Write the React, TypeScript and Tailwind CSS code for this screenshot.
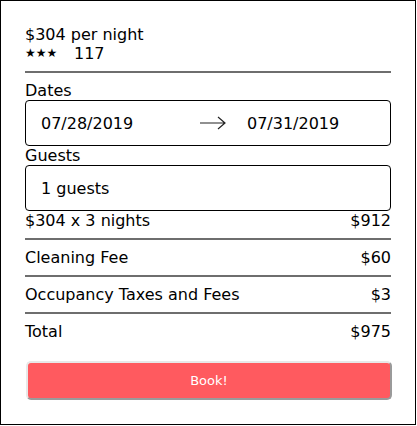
import React from 'react';

const rows = [
  { label: '$304 x 3 nights', value: '$912' },
  { label: 'Cleaning Fee', value: '$60' },
  { label: 'Occupancy Taxes and Fees', value: '$3' },
  { label: 'Total', value: '$975' },
];

export default function App() {
  return (
    <div
      className="w-[416px] h-[425px] border border-black bg-white text-black text-[16px] leading-[19px] px-6 pt-[24px]"
      style={{ fontFamily: '"DejaVu Sans", sans-serif' }}
    >
      {/* price header */}
      <div>$304 per night</div>
      <div className="flex items-center">
        <span className="text-[12px] leading-[19px] w-[49px]">★★★</span>
        <span>117</span>
      </div>
      <div className="h-[2px] bg-[#6e6e6e] mt-[8px]" />

      {/* dates */}
      <div className="mt-[8px]">Dates</div>
      <div className="h-[46px] border border-black rounded-[4px] flex items-center pl-[15px]">
        <span className="w-[158px]">07/28/2019</span>
        <svg width="28" height="14" viewBox="0 0 28 14" className="mr-[20px]">
          <path d="M1 7H26M19 1L26 7L19 13" fill="none" stroke="#222" strokeWidth="1.2" />
        </svg>
        <span>07/31/2019</span>
      </div>

      {/* guests */}
      <div>Guests</div>
      <div className="h-[46px] border border-black rounded-[4px] flex items-center pl-[15px]">
        1 guests
      </div>

      {/* breakdown */}
      {rows.map((r, i) => (
        <div key={r.label}>
          {i > 0 && <div className="h-[2px] bg-[#6e6e6e]" />}
          <div className={`flex justify-between ${i > 0 ? 'pt-[8px]' : ''} pb-[8px]`}>
            <span>{r.label}</span>
            <span>{r.value}</span>
          </div>
        </div>
      ))}

      <button className="mt-[12px] ml-[1px] w-[366px] h-[39px] rounded-[5px] bg-[#ff5a5f] text-white text-[13px] border-2 border-t-[#e8e8e8] border-l-[#e8e8e8] border-b-[#9a9a9a] border-r-[#9a9a9a]">
        Book!
      </button>
    </div>
  );
}
